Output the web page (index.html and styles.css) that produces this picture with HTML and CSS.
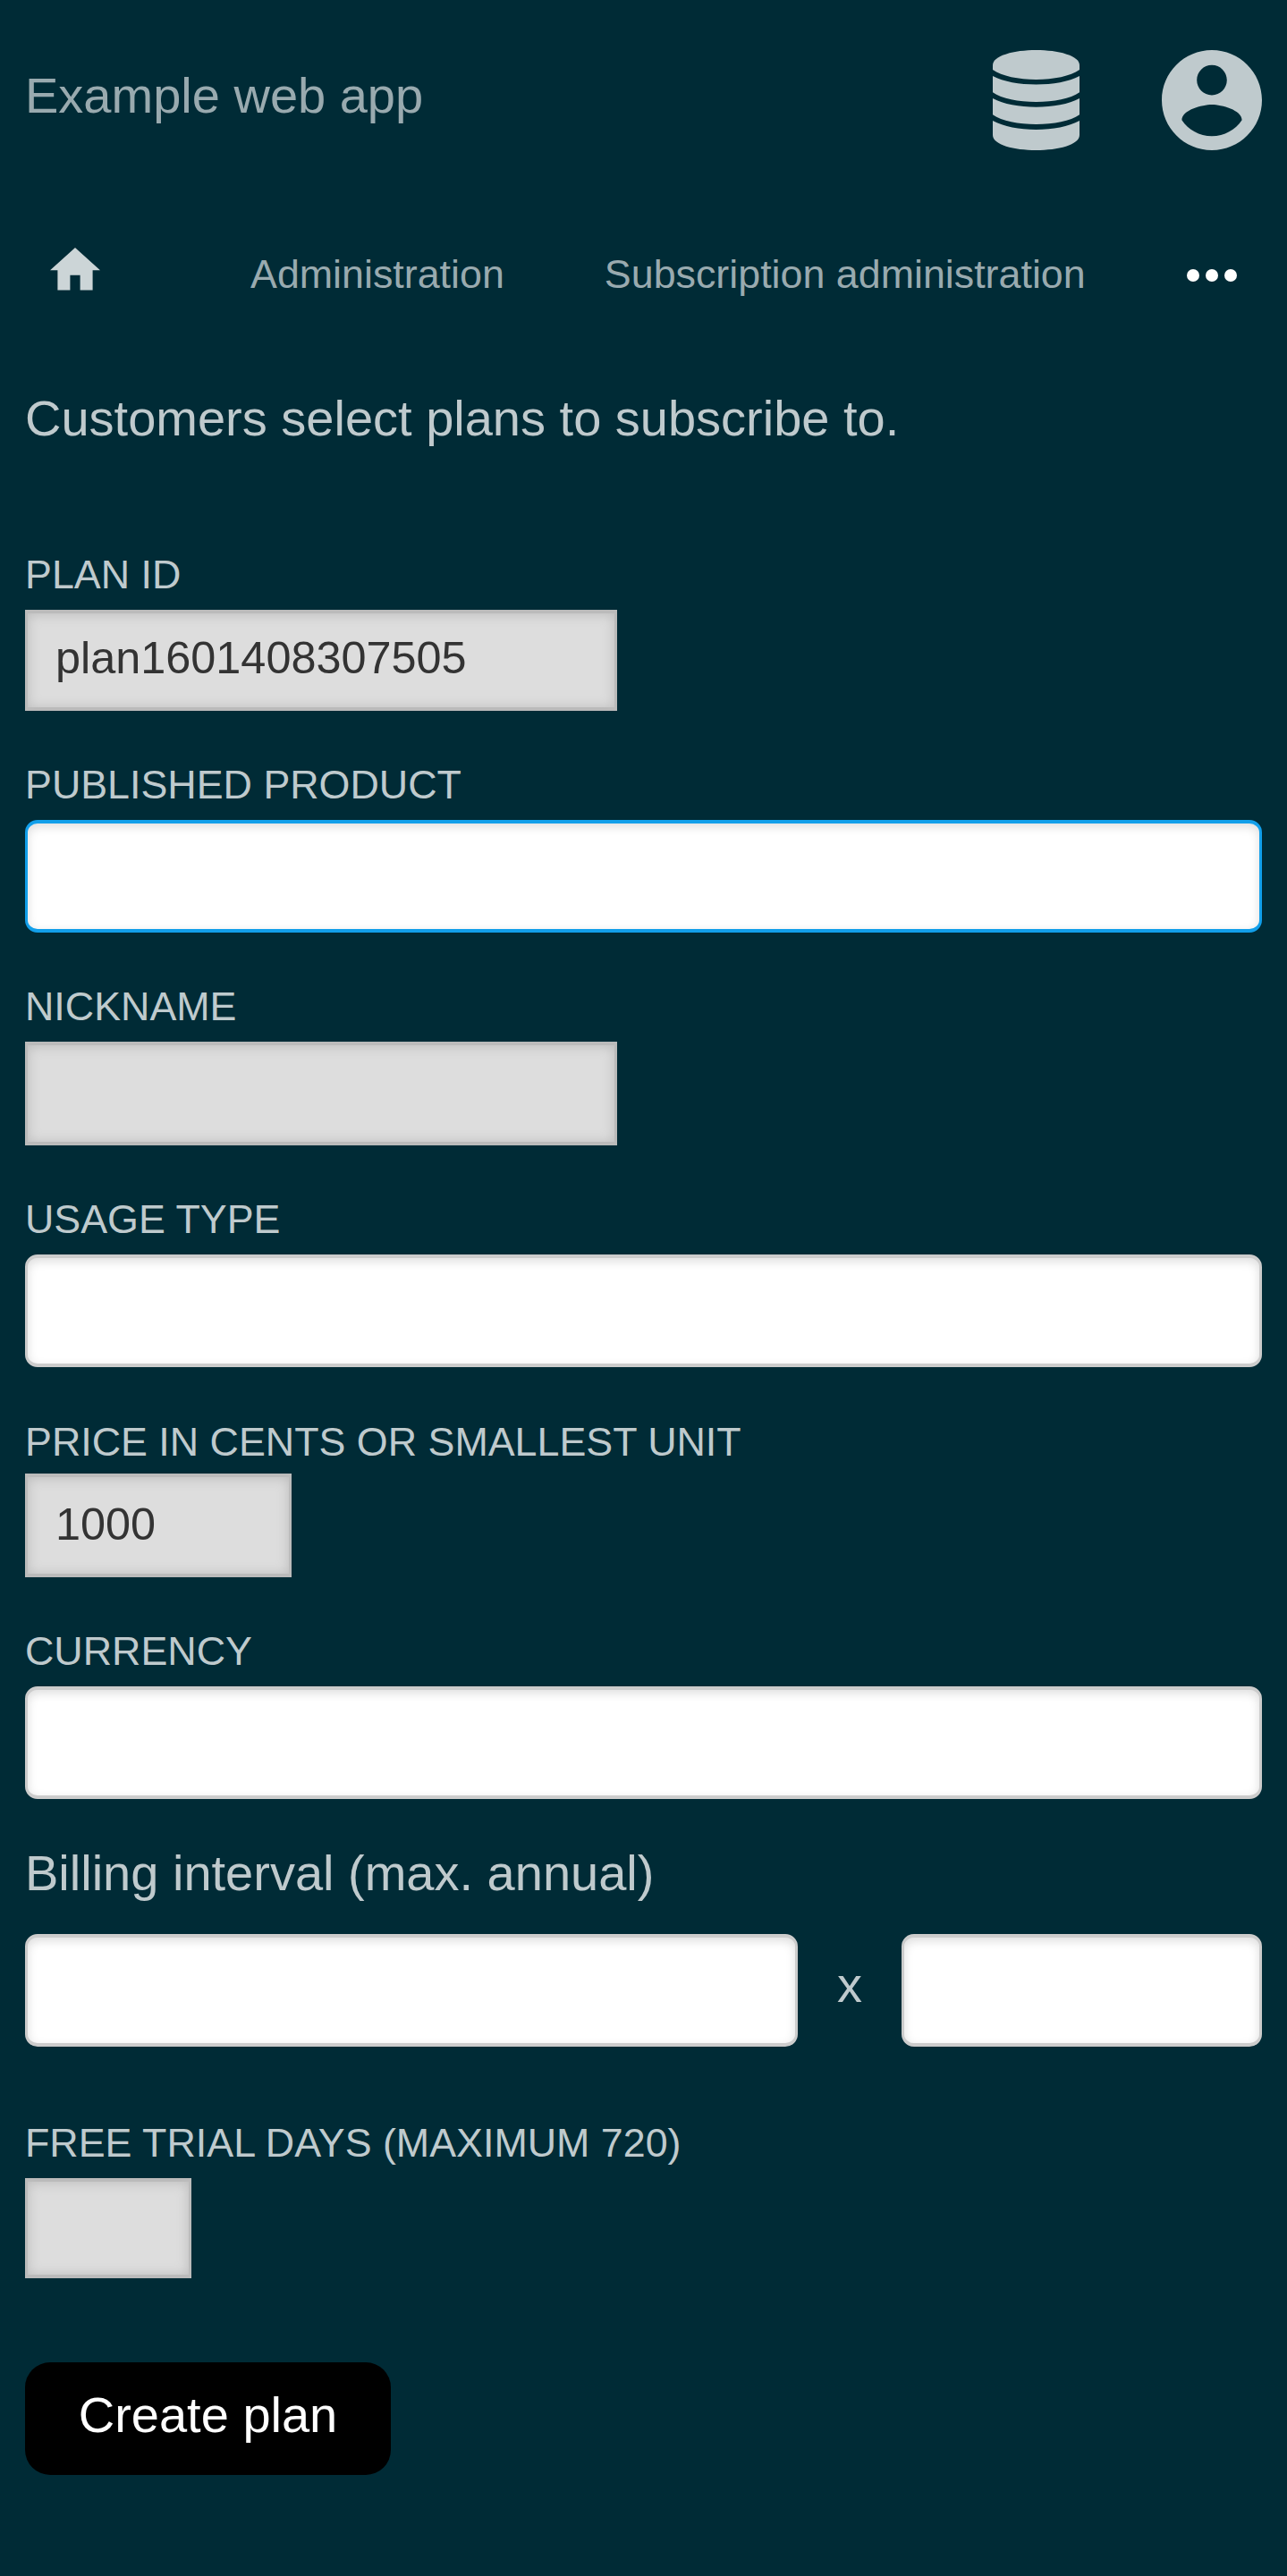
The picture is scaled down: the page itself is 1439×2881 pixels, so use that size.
FILE: index.html
```html
<!DOCTYPE html>
<html lang="en">
<head>
<meta charset="utf-8">
<title>Create plan</title>
<link rel="stylesheet" href="styles.css">
</head>
<body>
<header class="header">
  <h1 class="title">Example web app</h1>
  <div class="menus">
    <svg class="icon-database" viewBox="0 0 97 112" fill="currentColor">
      <path d="M0 17C0 6 24 0 48.5 0S97 6 97 17V22C87 29 68 33 48.5 33S10 29 0 22Z"/>
      <path d="M0 29C12 35.5 30 38.5 48.5 38.5S85 35.5 97 29V47.3C87 54.3 68 58 48.5 58S10 54.3 0 47.3Z"/>
      <path d="M0 54C12 60.5 30 63.7 48.5 63.7S85 60.5 97 54V72.3C87 79.3 68 83 48.5 83S10 79.3 0 72.3Z"/>
      <path d="M0 79C12 85.5 30 89 48.5 89S85 85.5 97 79V95C97 106 73 112 48.5 112S0 106 0 95Z"/>
    </svg>
    <svg class="icon-account" viewBox="2 2 20 20" fill="currentColor">
      <path d="M12 2C6.48 2 2 6.48 2 12s4.48 10 10 10 10-4.48 10-10S17.52 2 12 2zm0 3c1.66 0 3 1.34 3 3s-1.34 3-3 3-3-1.34-3-3 1.34-3 3-3zm0 14.2c-2.5 0-4.71-1.28-6-3.22.03-1.99 4-3.08 6-3.08 1.99 0 5.97 1.09 6 3.08-1.29 1.94-3.5 3.22-6 3.22z"/>
    </svg>
  </div>
</header>
<nav class="nav">
  <svg class="icon-home" viewBox="2 3 20 17" fill="currentColor"><path d="M10 20v-6h4v6h5v-8h3L12 3 2 12h3v8z"/></svg>
  <span class="nav-link">Administration</span>
  <span class="nav-link">Subscription administration</span>
  <svg class="icon-more" viewBox="0 0 56 14" fill="currentColor"><circle cx="7" cy="7" r="7"/><circle cx="28" cy="7" r="7"/><circle cx="49" cy="7" r="7"/></svg>
</nav>
<main class="content">
  <p class="intro">Customers select plans to subscribe to.</p>
  <form class="form">
    <div class="field">
      <label class="label" for="planid">PLAN ID</label>
      <input class="input input-id" id="planid" type="text" value="plan1601408307505">
    </div>
    <div class="field">
      <div class="label">PUBLISHED PRODUCT</div>
      <div class="select select-focus"></div>
    </div>
    <div class="field">
      <label class="label" for="nickname">NICKNAME</label>
      <input class="input input-nickname" id="nickname" type="text">
    </div>
    <div class="field">
      <div class="label">USAGE TYPE</div>
      <div class="select"></div>
    </div>
    <div class="field field-tight">
      <label class="label" for="amount">PRICE IN CENTS OR SMALLEST UNIT</label>
      <input class="input input-amount" id="amount" type="text" value="1000">
    </div>
    <div class="field">
      <div class="label">CURRENCY</div>
      <div class="select"></div>
    </div>
    <div class="billing">
      <div class="billing-title">Billing interval (max. annual)</div>
      <div class="billing-row">
        <div class="select"></div>
        <span class="times">x</span>
        <div class="select"></div>
      </div>
    </div>
    <div class="field field-trial">
      <label class="label" for="trial">FREE TRIAL DAYS (MAXIMUM 720)</label>
      <input class="input input-trial" id="trial" type="text">
    </div>
    <button class="button" type="button">Create plan</button>
  </form>
</main>
</body>
</html>
```
FILE: styles.css
```css
* {
  box-sizing: border-box;
}

body {
  margin: 0;
  min-height: 2881px;
  background: #002b36;
  color: #bfcacd;
  font-family: "Liberation Sans", Arial, sans-serif;
  font-size: 56px;
}

.header {
  display: flex;
  justify-content: space-between;
  padding: 56px 28px 0;
}

.title {
  margin: 0;
  color: #99aaaf;
  font-size: 56px;
  font-weight: 400;
  line-height: 101px;
}

.menus {
  display: flex;
  gap: 92px;
}

.icon-database {
  width: 97px;
  height: 112px;
}

.icon-account {
  width: 112px;
  height: 112px;
}

.nav {
  display: flex;
  align-items: center;
  height: 105px;
  margin-top: 86px;
  padding: 0 56px;
  color: #99aaaf;
  font-size: 44.8px;
}

.icon-home {
  width: 56px;
  height: 47.6px;
  margin: 0 56px 10.6px 0;
  color: #ccd5d7;
}

.nav-link {
  margin-left: 112px;
  white-space: nowrap;
}

.icon-more {
  width: 56px;
  height: 14px;
  margin: 3px 0 0 auto;
  color: #fff;
}

.content {
  padding: 77px 28px 0;
}

.intro {
  margin: 0;
  line-height: 64px;
}

.form {
  display: flex;
  flex-direction: column;
  align-items: stretch;
  gap: 55px;
  margin-top: 115px;
}

.field {
  display: flex;
  flex-direction: column;
  gap: 13px;
}

.field-tight {
  gap: 9px;
  margin-top: 1px;
}

.field-trial {
  margin-top: 25px;
}

.label {
  font-size: 44.8px;
  line-height: 54px;
}

.input {
  height: 116px;
  margin: 0;
  padding: 0 28px 3px 31px;
  border: 3px solid #bbb;
  border-width: 4px 3px;
  border-radius: 0;
  outline: 0;
  background: #ddd;
  box-shadow: inset 0 1px 14px #bbb;
  color: #333;
  font: 50.4px "Liberation Sans", Arial, sans-serif;
}

.input-id {
  width: 662px;
  height: 113px;
  padding-bottom: 7px;
}

.input-nickname {
  width: 662px;
}

.input-amount {
  width: 298px;
}

.input-trial {
  width: 186px;
  height: 112px;
}

.select {
  height: 126px;
  border: 3px solid #ccc;
  border-width: 4px 3px;
  border-radius: 14px;
  background: #fff;
  box-shadow: inset 0 3.5px 10.5px #ddd;
}

.select-focus {
  border-color: #129fea;
}

.billing {
  margin-top: -4px;
}

.billing-title {
  margin-bottom: 36px;
  line-height: 64px;
}

.billing-row {
  display: grid;
  grid-template-columns: 864px 116px 1fr;
}

.times {
  line-height: 113px;
  text-align: center;
}

.button {
  align-self: flex-start;
  width: 409px;
  height: 126px;
  margin-top: 39px;
  padding: 0 0 10px;
  border: 0;
  border-radius: 28px;
  background: #000;
  color: #fff;
  font: 56px "Liberation Sans", Arial, sans-serif;
}
```
